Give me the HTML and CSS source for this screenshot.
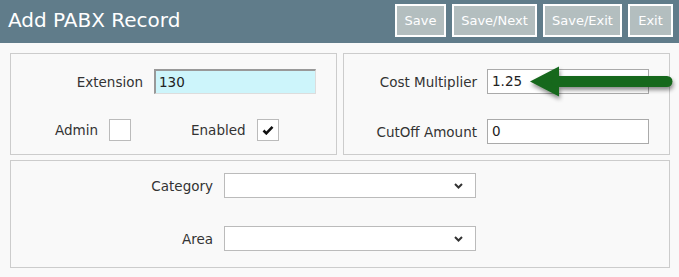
FILE: index.html
```html
<!DOCTYPE html>
<html>
<head>
<meta charset="utf-8">
<link rel="stylesheet" href="styles.css">
</head>
<body>
<header class="topbar">
  <h1 class="title">Add PABX Record</h1>
  <div class="actions">
    <button class="btn btn-save">Save</button>
    <button class="btn btn-next">Save/Next</button>
    <button class="btn btn-saveexit">Save/Exit</button>
    <button class="btn btn-exit">Exit</button>
  </div>
</header>
<main class="content">
  <div class="row-top">
    <section class="panel panel-a">
      <div class="field">
        <label class="lbl lbl-a">Extension</label>
        <div class="input input-hl">130</div>
      </div>
      <div class="checks">
        <label class="lbl lbl-admin">Admin</label>
        <span class="cbox"></span>
        <label class="lbl lbl-enabled">Enabled</label>
        <span class="cbox">
          <svg width="12" height="10" viewBox="0 0 12 10"><path d="M1.5 5.5 L4.3 8.3 L10.5 1.8" fill="none" stroke="#111" stroke-width="2.6"/></svg>
        </span>
      </div>
    </section>
    <section class="panel panel-b">
      <div class="field">
        <label class="lbl lbl-b">Cost Multiplier</label>
        <div class="input">1.25</div>
      </div>
      <div class="field field-gap">
        <label class="lbl lbl-b">CutOff Amount</label>
        <div class="input">0</div>
      </div>
    </section>
  </div>
  <section class="panel panel-c">
    <div class="field">
      <label class="lbl lbl-c">Category</label>
      <div class="select"><svg class="chev" width="9" height="6" viewBox="0 0 9 6"><path d="M1 1 L4.5 4.5 L8 1" fill="none" stroke="#333" stroke-width="2"/></svg></div>
    </div>
    <div class="field field-gap2">
      <label class="lbl lbl-c">Area</label>
      <div class="select"><svg class="chev" width="9" height="6" viewBox="0 0 9 6"><path d="M1 1 L4.5 4.5 L8 1" fill="none" stroke="#333" stroke-width="2"/></svg></div>
    </div>
  </section>
</main>
<svg class="arrow" width="160" height="50" viewBox="0 0 160 50">
  <defs>
    <filter id="sh" x="-10%" y="-30%" width="130%" height="180%">
      <feDropShadow dx="1" dy="3" stdDeviation="2.2" flood-color="#000" flood-opacity="0.45"/>
    </filter>
  </defs>
  <g filter="url(#sh)" fill="#16671c" stroke="none">
    <polygon points="5,21.5 34,6.5 34,36.5"/>
    <line x1="32" y1="21.5" x2="142" y2="21.5" stroke="#16671c" stroke-width="11" stroke-linecap="round"/>
  </g>
</svg>
</body>
</html>
```

FILE: styles.css
```css
* { box-sizing: border-box; }
html, body { margin: 0; padding: 0; }
body {
  background: #f9f9f9;
  font-family: "DejaVu Sans", Verdana, sans-serif;
  font-size: 13.5px;
  color: #333;
  position: relative;
  width: 679px;
  height: 277px;
  overflow: hidden;
}
.topbar {
  height: 43px;
  background: #607c8a;
  display: flex;
  align-items: flex-start;
  justify-content: space-between;
  padding: 0 6px 0 8px;
}
.title {
  margin: 0;
  font-weight: normal;
  font-size: 20px;
  color: #fff;
  line-height: 20px;
  padding-top: 10px;
}
.actions {
  display: flex;
  gap: 6px;
  padding-top: 4px;
}
.btn {
  height: 33px;
  border: 2px solid #fff;
  background: #b3bebf;
  color: #fff;
  font-family: "DejaVu Sans", Verdana, sans-serif;
  font-size: 13px;
  padding: 0;
  margin: 0;
}
.btn-save { width: 51px; }
.btn-next { width: 85px; }
.btn-saveexit { width: 79px; }
.btn-exit { width: 45px; }
.content {
  padding: 10px 9px 0 10px;
}
.row-top {
  display: flex;
  gap: 6px;
  margin-bottom: 5px;
}
.panel {
  background: #f9f9f9;
  border: 1px solid #ccc;
}
.panel-a, .panel-b {
  width: 327px;
  height: 102px;
  padding-top: 15px;
}
.panel-c {
  height: 108px;
  padding-top: 12px;
}
.field {
  display: flex;
  align-items: center;
  height: 25px;
}
.field-gap { margin-top: 25px; }
.field-gap2 { margin-top: 28px; }
.lbl {
  display: block;
  text-align: right;
  white-space: nowrap;
}
.lbl-a { width: 132px; margin-right: 11px; }
.lbl-b { width: 133px; margin-right: 10px; }
.lbl-c { width: 202px; margin-right: 11px; }
.input {
  width: 162px;
  height: 25px;
  border: 1px solid #aaa;
  background: #fff;
  padding: 0 0 0 4px;
  line-height: 23px;
  color: #222;
}
.input-hl {
  background: #cdf5fb;
  border-top: 2px solid #999;
  border-left: 2px solid #999;
  border-right: 1px solid #ddd;
  border-bottom: 1px solid #ddd;
  padding-left: 3px;
}
.checks {
  display: flex;
  align-items: center;
  margin-top: 25px;
  height: 22px;
}
.lbl-admin { margin-left: 44px; margin-right: 11px; }
.lbl-enabled { margin-left: 60px; margin-right: 11px; }
.cbox {
  width: 22px;
  height: 22px;
  background: #fff;
  border: 1px solid #bbb;
  display: flex;
  align-items: center;
  justify-content: center;
}
.select {
  width: 252px;
  height: 25px;
  background: #fff;
  border: 1px solid #bbb;
  display: flex;
  align-items: center;
  justify-content: flex-end;
  padding-right: 12px;
}
.arrow {
  position: absolute;
  left: 525px;
  top: 60px;
}
```
